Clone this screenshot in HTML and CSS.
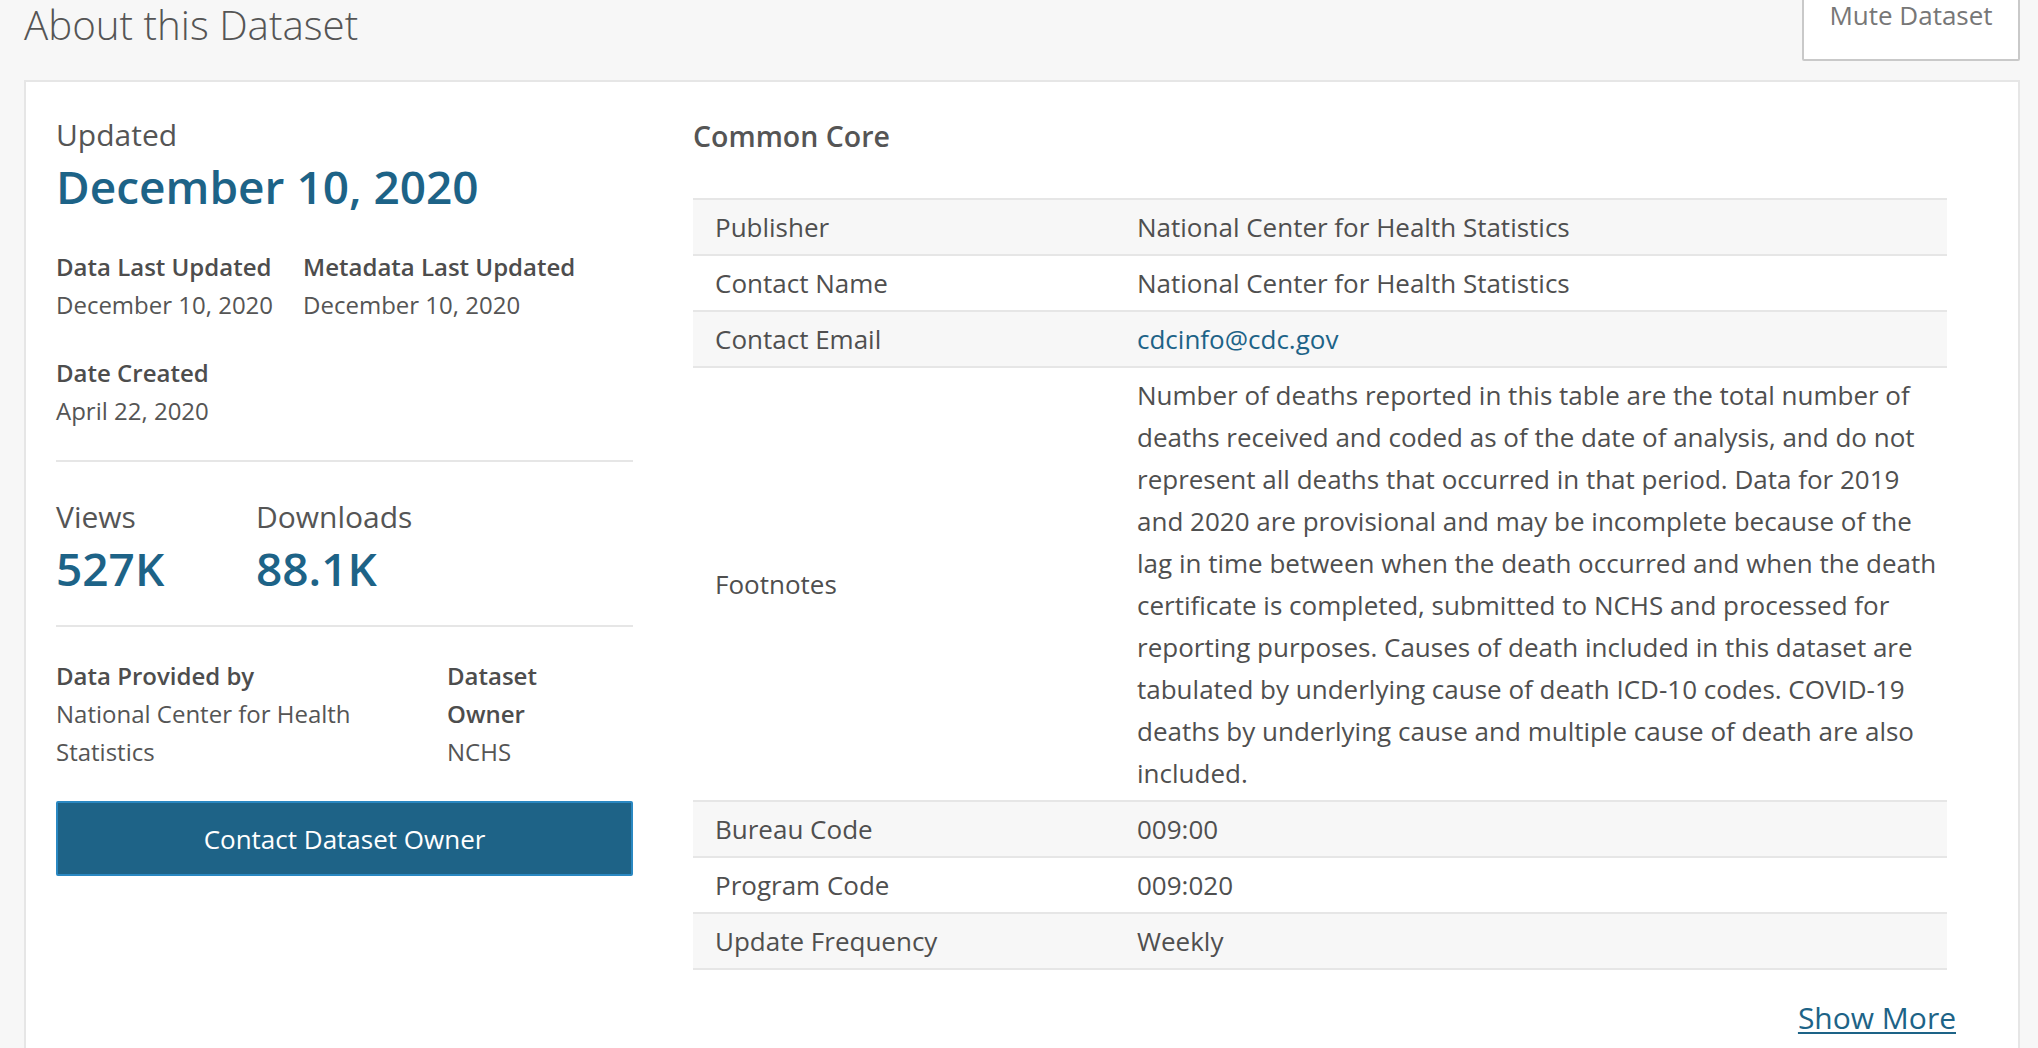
FILE: index.html
```html
<!DOCTYPE html>
<html lang="en">
<head>
<meta charset="utf-8">
<title>About this Dataset</title>
<link rel="stylesheet" href="styles.css">
</head>
<body>
<div class="page">
  <header class="page-header">
    <h1 class="page-title">About this Dataset</h1>
    <button class="mute-btn" type="button">Mute Dataset</button>
  </header>

  <section class="card">
    <div class="summary">
      <div class="updated-label">Updated</div>
      <div class="updated-date">December 10, 2020</div>

      <div class="meta-row">
        <div class="meta-item">
          <div class="meta-label">Data Last Updated</div>
          <div class="meta-value">December 10, 2020</div>
        </div>
        <div class="meta-item">
          <div class="meta-label">Metadata Last Updated</div>
          <div class="meta-value">December 10, 2020</div>
        </div>
      </div>

      <div class="meta-row meta-row-spaced">
        <div class="meta-item">
          <div class="meta-label">Date Created</div>
          <div class="meta-value">April 22, 2020</div>
        </div>
      </div>

      <hr class="divider divider-first">

      <div class="stats">
        <div class="stat">
          <div class="stat-label">Views</div>
          <div class="stat-value">527K</div>
        </div>
        <div class="stat">
          <div class="stat-label">Downloads</div>
          <div class="stat-value">88.1K</div>
        </div>
      </div>

      <hr class="divider divider-second">

      <div class="owners">
        <div class="owner">
          <div class="meta-label">Data Provided by</div>
          <div class="meta-value">National Center for Health Statistics</div>
        </div>
        <div class="owner owner-narrow">
          <div class="meta-label">Dataset Owner</div>
          <div class="meta-value">NCHS</div>
        </div>
      </div>

      <button class="contact-btn" type="button">Contact Dataset Owner</button>
    </div>

    <div class="details">
      <h2 class="section-title">Common Core</h2>
      <table class="core-table">
        <tbody>
          <tr><td class="key">Publisher</td><td class="val">National Center for Health Statistics</td></tr>
          <tr><td class="key">Contact Name</td><td class="val">National Center for Health Statistics</td></tr>
          <tr><td class="key">Contact Email</td><td class="val"><a class="link" href="#">cdcinfo@cdc.gov</a></td></tr>
          <tr><td class="key">Footnotes</td><td class="val">Number of deaths reported in this table are the total number of deaths received and coded as of the date of analysis, and do not represent all deaths that occurred in that period. Data for 2019 and 2020 are provisional and may be incomplete because of the lag in time between when the death occurred and when the death certificate is completed, submitted to NCHS and processed for reporting purposes. Causes of death included in this dataset are tabulated by underlying cause of death ICD-10 codes. COVID-19 deaths by underlying cause and multiple cause of death are also included.</td></tr>
          <tr><td class="key">Bureau Code</td><td class="val">009:00</td></tr>
          <tr><td class="key">Program Code</td><td class="val">009:020</td></tr>
          <tr><td class="key">Update Frequency</td><td class="val">Weekly</td></tr>
        </tbody>
      </table>
      <div class="show-more-row">
        <a class="show-more" href="#">Show More</a>
      </div>
    </div>
  </section>
</div>
</body>
</html>
```

FILE: styles.css
```css
* {
  box-sizing: border-box;
}

html, body {
  margin: 0;
  padding: 0;
}

body {
  background: #f7f7f7;
  font-family: "Open Sans", "Noto Sans", sans-serif;
  color: #545454;
  overflow: hidden;
}

.page {
  padding: 0 18px 0 24px;
}

.page-header {
  display: flex;
  justify-content: space-between;
  align-items: flex-start;
  height: 80px;
}

.page-title {
  margin: -2px 0 0 0;
  font-size: 40.3px;
  line-height: 54px;
  font-weight: 300;
  color: #555555;
}

.mute-btn {
  display: block;
  width: 218px;
  margin-top: -19px;
  padding: 14px 0 26px 0;
  background: #ffffff;
  border: 2px solid #c9c9c9;
  border-radius: 2px;
  font-family: "Open Sans", sans-serif;
  font-size: 26px;
  line-height: 36px;
  color: #777777;
  text-align: center;
}

.card {
  background: #ffffff;
  border: 2px solid #e6e6e6;
  padding: 33px 71px 40px 30px;
  display: grid;
  grid-template-columns: 577px 1fr;
  column-gap: 60px;
  min-height: 1000px;
}

/* left summary column */
.updated-label {
  font-size: 30px;
  line-height: 40px;
  color: #555555;
}

.updated-date {
  margin-top: 2px;
  font-size: 46px;
  line-height: 58px;
  font-weight: 600;
  color: #1d6387;
}

.meta-row {
  display: flex;
  gap: 30px;
  margin-top: 33px;
}

.meta-row-spaced {
  margin-top: 30px;
}

.meta-label {
  font-size: 24px;
  line-height: 38px;
  font-weight: 600;
  color: #4d4d4d;
}

.meta-value {
  font-size: 24px;
  line-height: 38px;
  color: #555555;
}

.divider {
  border: 0;
  height: 2px;
  background: #e6e6e6;
  margin: 0;
}

.divider-first {
  margin-top: 30px;
}

.divider-second {
  margin-top: 28px;
}

.stats {
  display: flex;
  margin-top: 35px;
}

.stat {
  width: 200px;
}

.stat-label {
  font-size: 30px;
  line-height: 40px;
  color: #555555;
}

.stat-value {
  margin-top: 2px;
  font-size: 46px;
  line-height: 58px;
  font-weight: 600;
  color: #1d6387;
}

.owners {
  display: grid;
  grid-template-columns: 360px 150px;
  column-gap: 31px;
  margin-top: 30px;
}

.owner-narrow .meta-label {
  max-width: 100px;
}

.contact-btn {
  display: block;
  width: 100%;
  height: 75px;
  margin-top: 30px;
  background: #1e6387;
  border: 2px solid #2a88c2;
  border-radius: 2px;
  color: #ffffff;
  font-family: "Open Sans", sans-serif;
  font-size: 26px;
  line-height: 36px;
  text-align: center;
}

/* right details column */
.section-title {
  margin: 0;
  font-size: 28.5px;
  line-height: 40px;
  font-weight: 600;
  color: #555555;
  padding-top: 1px;
}

.core-table {
  width: 100%;
  margin-top: 42px;
  border-collapse: collapse;
  font-size: 26px;
  line-height: 42px;
  color: #4f4f4f;
}

.core-table tr {
  border-top: 2px solid #e6e6e6;
  border-bottom: 2px solid #e6e6e6;
}

.core-table tr:nth-child(odd) {
  background: #f7f7f7;
}

.core-table td {
  padding: 6px 0 6px 22px;
  vertical-align: middle;
}

.core-table .key {
  width: 422px;
}

.core-table .val {
  padding-right: 4px;
}

.link {
  color: #1d6387;
  text-decoration: none;
}

.show-more-row {
  display: flex;
  justify-content: flex-end;
  margin-top: 28px;
  margin-right: -9px;
}

.show-more {
  font-size: 30px;
  line-height: 40px;
  color: #1d6387;
  text-decoration: underline;
  text-decoration-thickness: 2px;
  text-underline-offset: 3px;
}
```
